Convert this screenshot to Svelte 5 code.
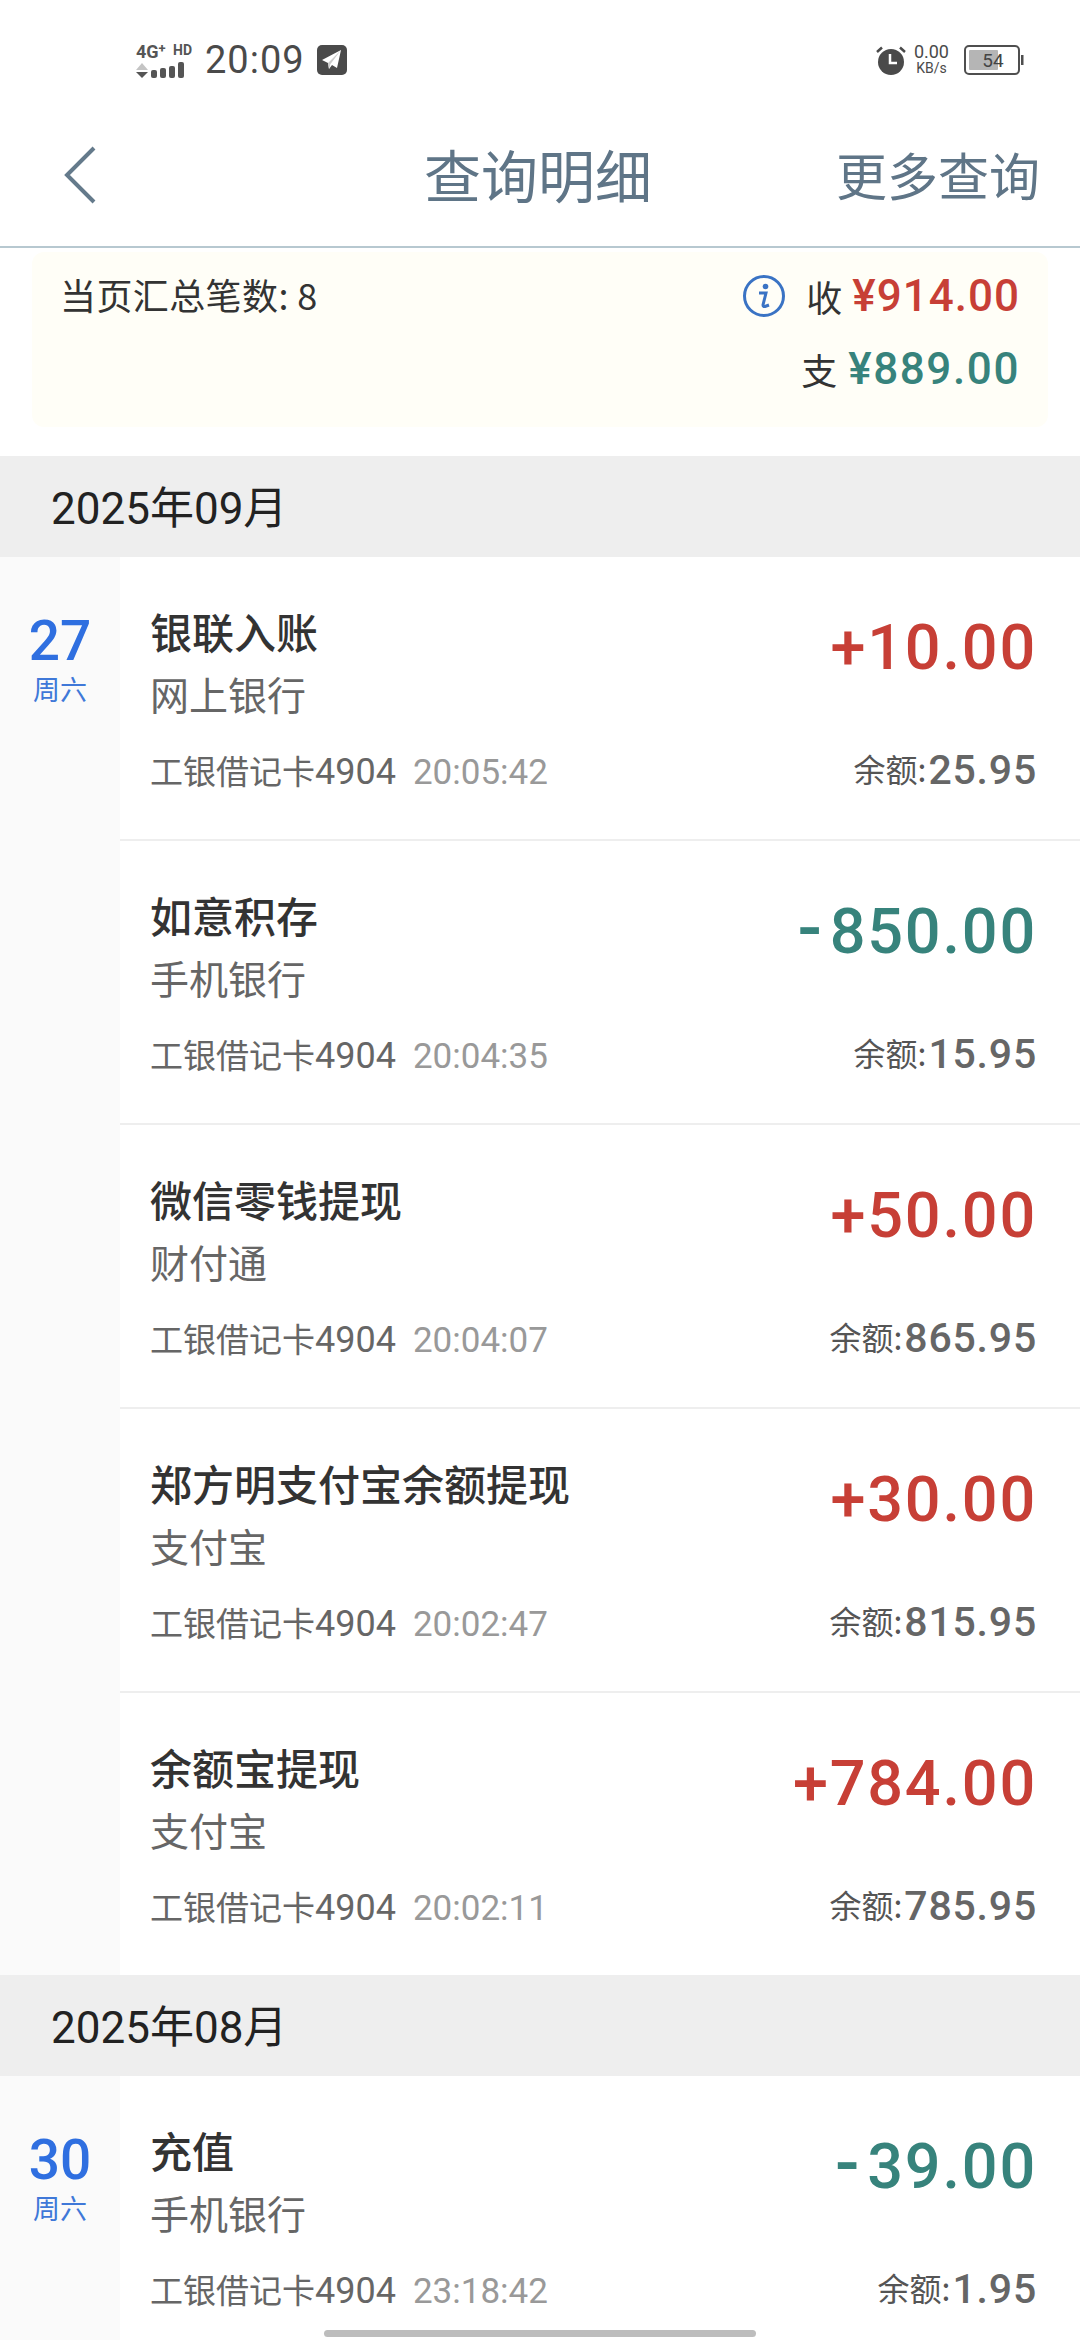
<script>
  const groups = [
    { month: '2025年09月', day: '27', rows: [
      { t: '银联入账', s: '网上银行', time: '20:05:42', a: '+10.00', b: '25.95' },
      { t: '如意积存', s: '手机银行', time: '20:04:35', a: '-850.00', b: '15.95' },
      { t: '微信零钱提现', s: '财付通', time: '20:04:07', a: '+50.00', b: '865.95' },
      { t: '郑方明支付宝余额提现', s: '支付宝', time: '20:02:47', a: '+30.00', b: '815.95' },
      { t: '余额宝提现', s: '支付宝', time: '20:02:11', a: '+784.00', b: '785.95' }
    ]},
    { month: '2025年08月', day: '30', rows: [
      { t: '充值', s: '手机银行', time: '23:18:42', a: '-39.00', b: '1.95' }
    ]}
  ];
</script>

<div class="page">
  <div class="status">
    <div class="net">
      <div class="net-top"><span>4G<sup>+</sup></span><span class="hd">HD</span></div>
      <svg width="54" height="17" viewBox="0 0 54 17">
        <path d="M0 8 L6 1 L12 8Z" fill="#c4c4c4"/><path d="M0 10 H12 L6 16Z" fill="#555"/>
        <rect x="15" y="8" width="6" height="8" rx="2" fill="#555"/>
        <rect x="24" y="6" width="6" height="10" rx="2" fill="#555"/>
        <rect x="33" y="4" width="6" height="12" rx="2" fill="#555"/>
        <rect x="42" y="0" width="6" height="16" rx="2" fill="#555"/>
      </svg>
    </div>
    <span class="clock">20:09</span>
    <svg class="plane" width="30" height="30" viewBox="0 0 30 30">
      <rect width="30" height="30" rx="5" fill="#4a4a4a"/>
      <path d="M24 5 L5 15 L11 18 L12 24 L15 20 L20 23Z" fill="#fff"/>
      <path d="M24 5 L11 18 L12 24 L13.500 19Z" fill="#ccc"/>
    </svg>
    <div class="grow"></div>
    <svg class="alarm" width="32" height="32" viewBox="0 0 32 32">
      <circle cx="16" cy="18" r="13" fill="#4a4a4a"/>
      <path d="M2 8 L7 3.500 M30 8 L25 3.500" stroke="#4a4a4a" stroke-width="2.500"/>
      <path d="M15 10 V19 H22" stroke="#fff" stroke-width="2.500" fill="none"/>
    </svg>
    <div class="speed"><span>0.00</span><span class="kb">KB/s</span></div>
    <svg class="batt" width="60" height="30" viewBox="0 0 60 30">
      <rect x="1" y="1" width="54" height="28" rx="4" fill="#fff" stroke="#4f4f4f" stroke-width="2"/>
      <rect x="5" y="5" width="29" height="20" rx="1" fill="#b5b5b5"/>
      <rect x="57" y="10" width="2.500" height="10" fill="#4f4f4f"/>
      <text x="29" y="21.500" text-anchor="middle">54</text>
    </svg>
  </div>

  <header class="nav">
    <svg class="back" width="36" height="60" viewBox="0 0 36 60">
      <path d="M32 3 L5 30 L32 57" fill="none" stroke="#647a8b" stroke-width="4"/>
    </svg>
    <h1>查询明细</h1>
    <span class="more">更多查询</span>
  </header>

  <section class="summary">
    <div class="sum-left">当页汇总笔数: 8</div>
    <div class="sum-right">
      <div class="sum-line">
        <svg class="info" width="44" height="44" viewBox="0 0 44 44">
          <circle cx="22" cy="22" r="19.500" fill="none" stroke="#3a73c4" stroke-width="3"/>
          <circle cx="23.500" cy="12.500" r="2.800" fill="#3a73c4"/>
          <path d="M17 19 H24 L21 31 Q21 33 23 32.500 L27 31" fill="none" stroke="#3a73c4" stroke-width="3"/>
        </svg>
        <span class="lab lab1">收</span><span class="money red">¥914.00</span>
      </div>
      <div class="sum-line line2">
        <span class="lab">支</span><span class="money green">¥889.00</span>
      </div>
    </div>
  </section>

  {#each groups as g}
    <div class="month">{g.month}</div>
    <div class="group">
      <div class="datecol">
        <div class="day">{g.day}</div>
        <div class="week">周六</div>
      </div>
      <div class="rows">
        {#each g.rows as r}
          <div class="row">
            <div class="main">
              <div class="title">{r.t}</div>
              <div class="sub">{r.s}</div>
              <div class="foot">工银借记卡<span class="num">4904</span><span class="time">{r.time}</span></div>
            </div>
            <div class="side">
              <div class="amt" class:red={r.a[0] === '+'} class:green={r.a[0] === '-'}><span class="sign" class:minus={r.a[0] === '-'}>{r.a[0]}</span>{r.a.slice(1)}</div>
              <div class="bal"><span class="ballab">余额:</span><span class="balnum">{r.b}</span></div>
            </div>
          </div>
        {/each}
      </div>
    </div>
  {/each}

  <div class="home"></div>
</div>

<style>
  :global(body) { margin: 0; background: #fff; }
  .page {
    position: relative;
    width: 1080px;
    height: 2340px;
    overflow: hidden;
    background: #fff;
    font-family: "Noto Sans CJK SC", Roboto, sans-serif;
  }
  .status {
    height: 120px;
    display: flex;
    align-items: center;
    padding: 0 56px 0 136px;
    box-sizing: border-box;
    color: #4a4a4a;
  }
  .net { display: flex; flex-direction: column; width: 56px; margin-right: 13px; }
  .net-top {
    display: flex;
    justify-content: space-between;
    align-items: flex-start;
    font: 700 18px/19px Roboto, sans-serif;
    color: #555;
    margin-bottom: 1px;
  }
  .net-top sup { font-size: 13px; line-height: 0; vertical-align: 5px; }
  .hd { font-size: 14px; line-height: 16px; }
  .clock { font: 400 38px/1 Roboto, sans-serif; letter-spacing: 1px; color: #4a4a4a; }
  .plane { margin-left: 12px; }
  .grow { flex: 1; }
  .alarm { margin-right: 7px; }
  .speed {
    display: flex;
    flex-direction: column;
    align-items: center;
    font: 400 18px/16px Roboto, sans-serif;
    margin-right: 15px;
  }
  .kb { font-size: 14px; }
  .batt text { font: 400 19px Roboto, sans-serif; fill: #444; }
  .nav {
    border-bottom: 2px solid #b7c8d0;
    display: flex;
    align-items: center;
    justify-content: space-between;
    padding: 0 40px 20px 62px;
    height: 106px;
    color: #5f7587;
  }
  h1 {
    font-size: 57px;
    font-weight: 400;
    margin: 0 0 0 142px;
    line-height: 1;
  }
  .more { font-size: 51px; line-height: 1; margin-top: 2px; }
  .back { margin-top: 4px; }
  .summary {
    margin: 4px 32px 29px 32px;
    height: 175px;
    background: #fffef7;
    border-radius: 12px;
    display: flex;
    justify-content: space-between;
    padding: 22px 28px 0 28px;
    box-sizing: border-box;
    color: #333;
    font-size: 36px;
  }
  .sum-left { line-height: 44px; margin-top: -2px; letter-spacing: 0.4px; }
  .sum-right { display: flex; flex-direction: column; align-items: flex-end; }
  .sum-line { display: flex; align-items: center; height: 44px; }
  .line2 { margin-top: 29px; }
  .line2 .money { letter-spacing: 1.6px; }
  .line2 .lab { margin-right: 11px; }
  .info { margin-right: 20px; }
  .lab { margin-right: 9px; }
  .lab1 { margin-right: 10px; }
  .money { font: 500 44px/44px Roboto, sans-serif; letter-spacing: 1px; }
  .red { color: #c73f36; }
  .green { color: #37837c; }
  .month {
    height: 101px;
    padding-bottom: 3px;
    box-sizing: border-box;
    background: #eeeeee;
    font-size: 44px;
    color: #222;
    display: flex;
    align-items: center;
    padding-left: 51px;
    font-family: Roboto, "Noto Sans CJK SC", sans-serif;
  }
  .group { display: flex; }
  .datecol {
    width: 120px;
    background: #fafafa;
    text-align: center;
    padding-top: 55px;
    box-sizing: border-box;
    color: #2f6fe0;
  }
  .day { font: 500 55px/58px Roboto, sans-serif; }
  .week { font-size: 27px; line-height: 37px; color: #3f78d8; }
  .rows { flex: 1; }
  .row {
    height: 284px;
    box-sizing: border-box;
    display: flex;
    justify-content: space-between;
    padding: 0 43px 0 30px;
    border-bottom: 2px solid #eeeeee;
  }
  .row:last-child { border-bottom: 0; height: 282px; }
  .main { padding-top: 47px; }
  .title { font-size: 42px; line-height: 54px; font-weight: 500; color: #333; }
  .sub { font-size: 39px; line-height: 54px; margin-top: 8px; color: #666; }
  .foot { font-size: 33px; line-height: 44px; margin-top: 28px; color: #666; white-space: nowrap; }
  .num { font-family: Roboto, sans-serif; font-size: 36px; }
  .time { font: 400 35px Roboto, sans-serif; color: #999; margin-left: 17px; }
  .side { display: flex; flex-direction: column; align-items: flex-end; padding-top: 52px; }
  .amt { font: 500 63px/78px Roboto, sans-serif; letter-spacing: 1.8px; }
  .sign.minus { margin-right: 6px; font-size: 72px; line-height: 0; }
  .bal { font-size: 32px; line-height: 50px; margin-top: 58px; color: #555; white-space: nowrap; }
  .ballab { position: relative; top: -2px; margin-right: 2px; }
  .balnum { font: 500 41px/50px Roboto, sans-serif; color: #666; letter-spacing: 0.8px; }
  .home {
    position: absolute;
    left: 324px;
    top: 2330px;
    width: 432px;
    height: 7px;
    border-radius: 4px;
    background: #bdbdbd;
  }
</style>
